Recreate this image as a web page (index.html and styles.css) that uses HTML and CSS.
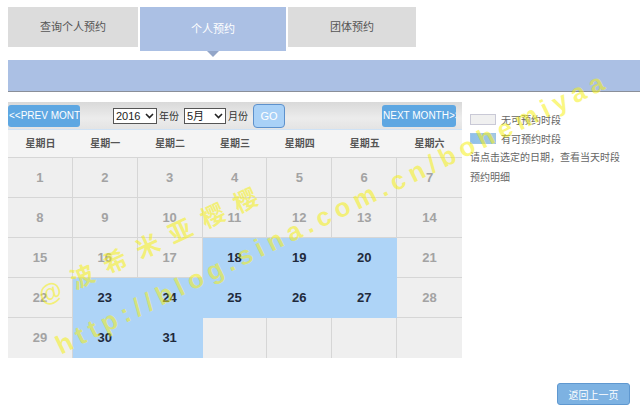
FILE: index.html
```html
<!DOCTYPE html>
<html lang="zh">
<head>
  <meta charset="UTF-8">
  <title>个人预约</title>
  <link rel="stylesheet" href="styles.css">
</head>
<body>

  <div class="tabs">
    <div class="tab">查询个人预约</div>
    <div class="tab active">个人预约</div>
    <div class="tab">团体预约</div>
  </div>

  <div class="bar"></div>

  <div class="main">
    <div class="calendar">
      <div class="toolbar">
        <button class="month-btn">&lt;&lt;PREV MONTH</button>
        <div class="picker">
          <label class="select sel-year">
            <select><option>2016</option></select>
            <svg width="9" height="6" viewBox="0 0 9 6"><path d="M1 1l3.5 3.5L8 1" fill="none" stroke="#222" stroke-width="1.6"/></svg>
          </label>
          <span>年份</span>
          <label class="select sel-month">
            <select><option>5月</option></select>
            <svg width="9" height="6" viewBox="0 0 9 6"><path d="M1 1l3.5 3.5L8 1" fill="none" stroke="#222" stroke-width="1.6"/></svg>
          </label>
          <span>月份</span>
          <button class="go">GO</button>
        </div>
        <button class="month-btn next">NEXT MONTH&gt;&gt;</button>
      </div>

      <div class="weekdays">
        <div>星期日</div><div>星期一</div><div>星期二</div><div>星期三</div>
        <div>星期四</div><div>星期五</div><div>星期六</div>
      </div>

      <div class="days" id="days"></div>
    </div>

    <div class="legend">
      <div class="legend-row"><span class="swatch"></span>无可预约时段</div>
      <div class="legend-row"><span class="swatch open"></span>有可预约时段</div>
      <p>请点击选定的日期，查看当天时段<br>预约明细</p>
    </div>
  </div>

  <div class="footer">
    <button class="back">返回上一页</button>
  </div>

  <div class="watermark wm-name">@波希米亚樱樱</div>
  <div class="watermark wm-url">http://blog.sina.com.cn/bohemiyaa</div>

  <script>
    // 2016年5月，1号是星期日
    const openDays = [18, 19, 20, 23, 24, 25, 26, 27, 30, 31];
    const box = document.getElementById("days");
    for (let i = 1; i <= 35; i++) {
      const cell = document.createElement("div");
      cell.className = "day";
      if (i <= 31) {
        cell.textContent = i;
        if (openDays.includes(i)) cell.classList.add("open");
      }
      box.appendChild(cell);
    }
  </script>
</body>
</html>
```

FILE: styles.css
```css
body {
  margin: 0;
  font-family: "Liberation Sans", "Noto Sans CJK SC", sans-serif;
  background: white;
  color: #555;
  overflow: hidden;
}

.tabs {
  display: flex;
  align-items: flex-start;
  gap: 2px;
  padding: 7px 0 0 8px;
  height: 44px;
}

.tab {
  height: 40px;
  line-height: 41px;
  text-align: center;
  background: #dcdcdc;
  font-size: 11px;
  color: #555;
}

.tab:nth-child(1) { width: 130px; }
.tab:nth-child(3) { width: 128px; }

.tab.active {
  position: relative;
  width: 146px;
  height: 44px;
  line-height: 45px;
  background: #abc0e4;
  color: white;
}

.tab.active::after {
  content: "";
  position: absolute;
  left: 67px;
  top: 44px;
  border-left: 6px solid transparent;
  border-right: 6px solid transparent;
  border-top: 6px solid #93a6c8;
}

.bar {
  margin: 9px 0 0 8px;
  height: 31px;
  background: #abc0e4;
  border-bottom: 1px solid #8a8f99;
}

.main {
  display: flex;
  margin: 10px 0 0 8px;
}

.calendar {
  width: 454px;
  background: #efefef;
}

.toolbar {
  display: flex;
  align-items: center;
  height: 27px;
  padding-right: 6px;
  background: linear-gradient(#d9d9d9, #ececec 60%, #e4e4e4);
  border-bottom: 1px solid #cfe2f5;
}

.month-btn {
  width: 72px;
  height: 22px;
  padding: 0 0 0 1px;
  border: none;
  border-radius: 3px;
  background: #5ea7e2;
  color: white;
  font-family: "Liberation Sans", sans-serif;
  font-size: 10px;
  text-align: left;
  white-space: nowrap;
  overflow: hidden;
}

.month-btn.next {
  width: 74px;
  margin-left: auto;
}

.picker {
  display: flex;
  align-items: center;
  margin-left: 33px;
  font-size: 10px;
  color: #333;
}

.select {
  display: flex;
  align-items: center;
  justify-content: space-between;
  height: 14px;
  padding: 0 2px 0 2px;
  margin-right: 2px;
  border: 1px solid #555;
  background: white;
}

.select select {
  appearance: none;
  border: none;
  padding: 0;
  background: transparent;
  font-family: "Liberation Sans", "Noto Sans CJK SC", sans-serif;
  font-size: 11px;
  color: #222;
  outline: none;
}

.sel-year { width: 38px; }
.sel-month { width: 36px; margin-left: 5px; }

.go {
  width: 32px;
  height: 24px;
  margin-left: 5px;
  padding: 0;
  border: 1px solid #5d91cc;
  border-radius: 4px;
  background: #a9d1f7;
  color: white;
  font-family: "Liberation Sans", sans-serif;
  font-size: 11px;
}

.weekdays {
  display: grid;
  grid-template-columns: repeat(7, 1fr);
  height: 27px;
  line-height: 27px;
  background: #f4f4f4;
  font-size: 10px;
  font-weight: bold;
  color: #555;
  text-align: center;
  border-bottom: 1px solid #d6d6d6;
}

.days {
  display: grid;
  grid-template-columns: repeat(7, 1fr);
}

.day {
  height: 39px;
  line-height: 39px;
  text-align: center;
  font-size: 13px;
  font-weight: bold;
  color: #a3a3a3;
  border-right: 1px solid #d6d6d6;
  border-bottom: 1px solid #d6d6d6;
}

.day:nth-child(7n) { border-right: none; }
.day:nth-child(n+29) { border-bottom: none; height: 40px; }

.day.open {
  background: #aed4f7;
  color: #1f2a3c;
  border-color: #aed4f7;
}

.legend {
  margin: 8px 0 0 8px;
  font-size: 10px;
  color: #666;
}

.legend-row {
  display: flex;
  align-items: center;
  height: 19px;
}

.swatch {
  width: 24px;
  height: 9px;
  margin-right: 5px;
  background: #f0f0f0;
  border: 1px solid #c9c9d6;
}

.swatch.open {
  background: linear-gradient(90deg, #8fc0ea, #a6c9e0);
  border-color: #9cc4e8;
}

.legend p {
  margin: 0;
  line-height: 20px;
}

.footer {
  display: flex;
  justify-content: flex-end;
  padding: 25px 10px 0 0;
}

.back {
  width: 73px;
  height: 22px;
  padding: 0;
  border: 1px solid #5f98d0;
  border-radius: 3px;
  background: #7db2e2;
  color: white;
  font-family: "Noto Sans CJK SC", sans-serif;
  font-size: 10px;
}

.watermark {
  position: absolute;
  left: 0;
  top: 0;
  transform-origin: 0 100%;
  white-space: nowrap;
  font-family: "Liberation Sans", "Noto Sans CJK SC", sans-serif;
  font-weight: bold;
  color: rgba(246, 240, 20, 0.55);
  pointer-events: none;
}

.wm-name {
  left: 46px;
  top: 276px;
  font-size: 24px;
  letter-spacing: 12px;
  transform: rotate(-25deg);
}

.wm-url {
  left: 64px;
  top: 330px;
  font-size: 26px;
  letter-spacing: 5.6px;
  transform: rotate(-26deg);
}
```
